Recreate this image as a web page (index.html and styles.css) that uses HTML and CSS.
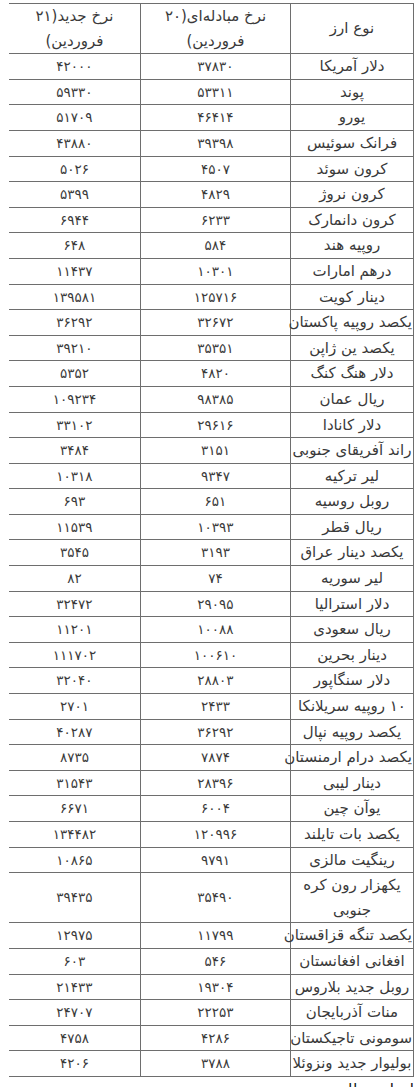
FILE: index.html
```html
<!DOCTYPE html>
<html lang="fa" dir="rtl">
<head>
<meta charset="utf-8">
<title>نرخ ارز</title>
<link rel="stylesheet" href="styles.css">
</head>
<body>
<table class="rates">
<colgroup>
<col class="c-name">
<col class="c-old">
<col class="c-new">
</colgroup>
<thead>
<tr><th>نوع ارز</th><th>نرخ مبادله‌ای(۲۰<br>فروردین)</th><th>نرخ جدید(۲۱<br>فروردین)</th></tr>
</thead>
<tbody>
<tr><td>دلار آمریکا</td><td>۳۷۸۳۰</td><td>۴۲۰۰۰</td></tr>
<tr><td>پوند</td><td>۵۳۳۱۱</td><td>۵۹۳۳۰</td></tr>
<tr><td>یورو</td><td>۴۶۴۱۴</td><td>۵۱۷۰۹</td></tr>
<tr><td>فرانک سوئیس</td><td>۳۹۳۹۸</td><td>۴۳۸۸۰</td></tr>
<tr><td>کرون سوئد</td><td>۴۵۰۷</td><td>۵۰۲۶</td></tr>
<tr><td>کرون نروژ</td><td>۴۸۲۹</td><td>۵۳۹۹</td></tr>
<tr><td>کرون دانمارک</td><td>۶۲۳۳</td><td>۶۹۴۴</td></tr>
<tr><td>روپیه هند</td><td>۵۸۴</td><td>۶۴۸</td></tr>
<tr><td>درهم امارات</td><td>۱۰۳۰۱</td><td>۱۱۴۳۷</td></tr>
<tr><td>دینار کویت</td><td>۱۲۵۷۱۶</td><td>۱۳۹۵۸۱</td></tr>
<tr><td>یکصد روپیه پاکستان</td><td>۳۲۶۷۲</td><td>۳۶۲۹۲</td></tr>
<tr><td>یکصد ین ژاپن</td><td>۳۵۳۵۱</td><td>۳۹۲۱۰</td></tr>
<tr><td>دلار هنگ کنگ</td><td>۴۸۲۰</td><td>۵۳۵۲</td></tr>
<tr><td>ریال عمان</td><td>۹۸۳۸۵</td><td>۱۰۹۲۳۴</td></tr>
<tr><td>دلار کانادا</td><td>۲۹۶۱۶</td><td>۳۳۱۰۲</td></tr>
<tr><td>راند آفریقای جنوبی</td><td>۳۱۵۱</td><td>۳۴۸۴</td></tr>
<tr><td>لیر ترکیه</td><td>۹۳۴۷</td><td>۱۰۳۱۸</td></tr>
<tr><td>روبل روسیه</td><td>۶۵۱</td><td>۶۹۳</td></tr>
<tr><td>ریال قطر</td><td>۱۰۳۹۳</td><td>۱۱۵۳۹</td></tr>
<tr><td>یکصد دینار عراق</td><td>۳۱۹۳</td><td>۳۵۴۵</td></tr>
<tr><td>لیر سوریه</td><td>۷۴</td><td>۸۲</td></tr>
<tr><td>دلار استرالیا</td><td>۲۹۰۹۵</td><td>۳۲۴۷۲</td></tr>
<tr><td>ریال سعودی</td><td>۱۰۰۸۸</td><td>۱۱۲۰۱</td></tr>
<tr><td>دینار بحرین</td><td>۱۰۰۶۱۰</td><td>۱۱۱۷۰۲</td></tr>
<tr><td>دلار سنگاپور</td><td>۲۸۸۰۳</td><td>۳۲۰۴۰</td></tr>
<tr><td>۱۰ روپیه سریلانکا</td><td>۲۴۳۳</td><td>۲۷۰۱</td></tr>
<tr><td>یکصد روپیه نپال</td><td>۳۶۲۹۲</td><td>۴۰۲۸۷</td></tr>
<tr><td>یکصد درام ارمنستان</td><td>۷۸۷۴</td><td>۸۷۳۵</td></tr>
<tr><td>دینار لیبی</td><td>۲۸۳۹۶</td><td>۳۱۵۴۳</td></tr>
<tr><td>یوآن چین</td><td>۶۰۰۴</td><td>۶۶۷۱</td></tr>
<tr><td>یکصد بات تایلند</td><td>۱۲۰۹۹۶</td><td>۱۳۴۴۸۲</td></tr>
<tr><td>رینگیت مالزی</td><td>۹۷۹۱</td><td>۱۰۸۶۵</td></tr>
<tr><td>یکهزار رون کره<br>جنوبی</td><td>۳۵۴۹۰</td><td>۳۹۴۳۵</td></tr>
<tr><td>یکصد تنگه قزاقستان</td><td>۱۱۷۹۹</td><td>۱۲۹۷۵</td></tr>
<tr><td>افغانی افغانستان</td><td>۵۴۶</td><td>۶۰۳</td></tr>
<tr><td>روبل جدید بلاروس</td><td>۱۹۳۰۴</td><td>۲۱۴۳۳</td></tr>
<tr><td>منات آذربایجان</td><td>۲۲۲۵۳</td><td>۲۴۷۰۷</td></tr>
<tr><td>سومونی تاجیکستان</td><td>۴۲۸۶</td><td>۴۷۵۸</td></tr>
<tr><td>بولیوار جدید ونزوئلا</td><td>۳۷۸۸</td><td>۴۲۰۶</td></tr>
</tbody>
</table>
<p class="note">انتهای مطلب</p>
</body>
</html>
```

FILE: styles.css
```css
html, body {
  background: #ffffff;
}
body {
  margin: 3px 4px 0 9px;
  font-family: "DejaVu Sans", "Noto Sans", sans-serif;
  font-size: 15px;
  color: #3a3a3a;
}
.rates {
  width: 405px;
  border-collapse: collapse;
  table-layout: fixed;
}
.c-name { width: 123px; }
.c-old { width: 150px; }
.c-new { width: 132px; }
.rates th,
.rates td {
  border: 1px solid #6e6e6e;
  padding: 0 1px;
  line-height: 24.6px;
  text-align: center;
  vertical-align: middle;
  font-weight: normal;
}
.rates td:first-child {
  white-space: nowrap;
}
.rates td + td {
  font-size: 13.5px;
}
.note {
  margin: 2px 0 0;
  text-align: right;
  color: #111111;
  line-height: 20px;
}
```
